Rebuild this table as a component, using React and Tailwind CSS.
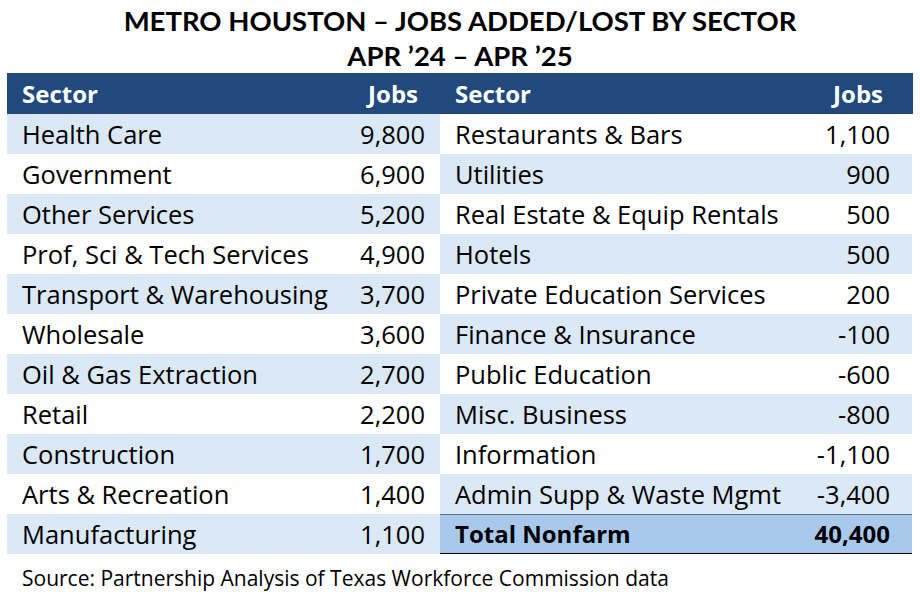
import React from "react";

const left = [
  ["Health Care", "9,800"],
  ["Government", "6,900"],
  ["Other Services", "5,200"],
  ["Prof, Sci & Tech Services", "4,900"],
  ["Transport & Warehousing", "3,700"],
  ["Wholesale", "3,600"],
  ["Oil & Gas Extraction", "2,700"],
  ["Retail", "2,200"],
  ["Construction", "1,700"],
  ["Arts & Recreation", "1,400"],
  ["Manufacturing", "1,100"],
];

const right = [
  ["Restaurants & Bars", "1,100"],
  ["Utilities", "900"],
  ["Real Estate & Equip Rentals", "500"],
  ["Hotels", "500"],
  ["Private Education Services", "200"],
  ["Finance & Insurance", "-100"],
  ["Public Education", "-600"],
  ["Misc. Business", "-800"],
  ["Information", "-1,100"],
  ["Admin Supp & Waste Mgmt", "-3,400"],
];

export default function App() {
  return (
    <div
      className="w-[920px] h-[592px] bg-white text-black overflow-hidden"
      style={{ fontFamily: "'Open Sans', 'Liberation Sans', sans-serif" }}
    >
      <div
        className="pt-[3px] text-center font-bold text-[27.5px] leading-[35px]"
        style={{ fontFamily: "Lato, 'Liberation Sans', sans-serif" }}
      >
        <div>METRO HOUSTON – JOBS ADDED/LOST BY SECTOR</div>
        <div>APR ’24 – APR ’25</div>
      </div>
      <div className="ml-[7px] w-[906px]">
        <div className="flex h-[41px] bg-[#21497b] text-white font-bold text-[24px] items-center">
          <div className="w-[433px] flex pl-[15px] pr-[22px] justify-between">
            <span>Sector</span>
            <span>Jobs</span>
          </div>
          <div className="flex-1 flex pl-[15px] pr-[30px] justify-between">
            <span>Sector</span>
            <span>Jobs</span>
          </div>
        </div>
        <div className="flex">
          <div className="w-[433px]">
            {left.map(([s, j], i) => (
              <div
                key={s}
                className={`h-[40px] flex items-center justify-between pl-[15px] pr-[15px] text-[25.5px] ${
                  i % 2 === 0 ? "bg-[#dbe8f6]" : "bg-white"
                }`}
              >
                <span>{s}</span>
                <span>{j}</span>
              </div>
            ))}
          </div>
          <div className="w-[472px]">
            {right.map(([s, j], i) => (
              <div
                key={s}
                className={`h-[40px] flex items-center justify-between pl-[15px] pr-[22px] text-[25.5px] ${
                  i % 2 === 1 ? "bg-[#dbe8f6]" : "bg-white"
                }`}
              >
                <span>{s}</span>
                <span>{j}</span>
              </div>
            ))}
            <div className="h-[40px] flex items-center justify-between pl-[15px] pr-[22px] text-[24px] font-bold bg-[#a8c9ec] border-t border-t-[#5b6f86] border-b-[1.5px] border-b-black">
              <span>Total Nonfarm</span>
              <span>40,400</span>
            </div>
          </div>
        </div>
        <div className="pl-[15px] pt-[9px] text-[21px]">
          Source: Partnership Analysis of Texas Workforce Commission data
        </div>
      </div>
    </div>
  );
}
